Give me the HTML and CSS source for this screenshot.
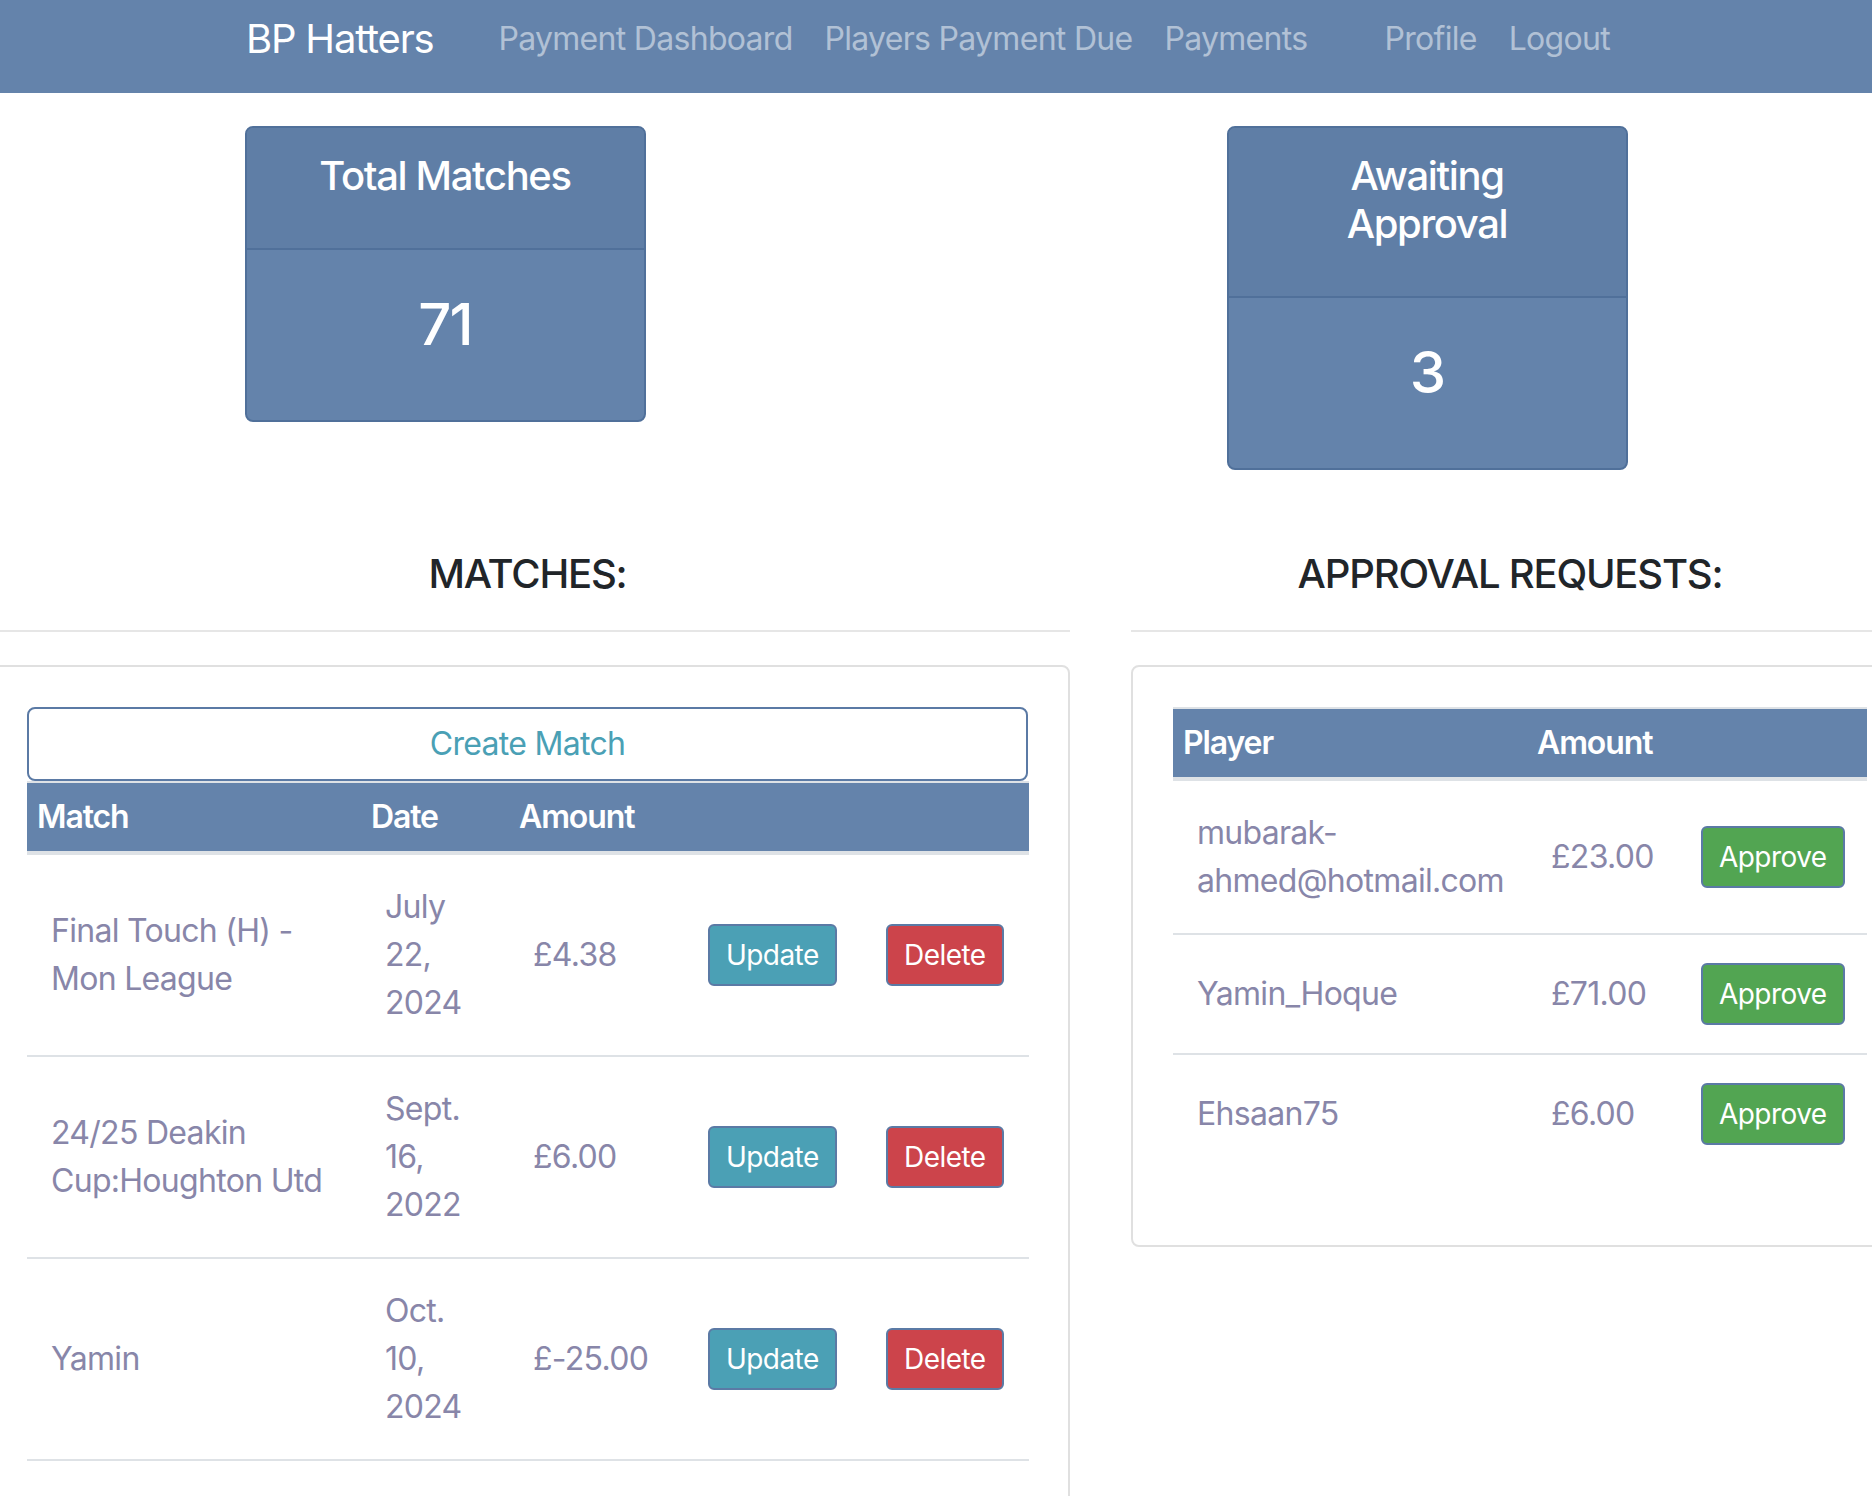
FILE: index.html
```html
<!DOCTYPE html>
<html lang="en">
<head>
<meta charset="utf-8">
<title>BP Hatters</title>
<link rel="stylesheet" href="styles.css">
</head>
<body>
<nav class="navbar">
  <div class="nav-inner">
    <a class="brand" href="#">BP Hatters</a>
    <ul class="nav-links">
      <li><a href="#">Payment Dashboard</a></li>
      <li><a href="#">Players Payment Due</a></li>
      <li><a href="#">Payments</a></li>
    </ul>
    <ul class="nav-links nav-right">
      <li><a href="#">Profile</a></li>
      <li><a href="#">Logout</a></li>
    </ul>
  </div>
</nav>

<main>
  <section class="stats">
    <div class="stat-card">
      <div class="stat-head"><h5 class="stat-title">Total Matches</h5></div>
      <div class="stat-body"><h2 class="stat-value">71</h2></div>
    </div>
    <div class="stat-card">
      <div class="stat-head"><h5 class="stat-title">Awaiting Approval</h5></div>
      <div class="stat-body"><h2 class="stat-value">3</h2></div>
    </div>
  </section>

  <section class="panels">
    <div class="panel-col col-matches">
      <h4 class="section-title">MATCHES:</h4>
      <hr class="divider">
      <div class="panel-card">
        <a class="btn-create" href="#">Create Match</a>
        <table class="data-table matches-table">
          <colgroup>
            <col class="w-match"><col class="w-date"><col class="w-amount"><col class="w-update"><col class="w-delete">
          </colgroup>
          <thead>
            <tr><th>Match</th><th>Date</th><th>Amount</th><th></th><th></th></tr>
          </thead>
          <tbody>
            <tr>
              <td>Final Touch (H) - Mon League</td>
              <td>July 22, 2024</td>
              <td class="amount">£4.38</td>
              <td><a class="btn btn-info" href="#">Update</a></td>
              <td><a class="btn btn-danger" href="#">Delete</a></td>
            </tr>
            <tr>
              <td>24/25 Deakin Cup:Houghton Utd</td>
              <td>Sept. 16, 2022</td>
              <td class="amount">£6.00</td>
              <td><a class="btn btn-info" href="#">Update</a></td>
              <td><a class="btn btn-danger" href="#">Delete</a></td>
            </tr>
            <tr>
              <td>Yamin</td>
              <td>Oct. 10, 2024</td>
              <td class="amount">£-25.00</td>
              <td><a class="btn btn-info" href="#">Update</a></td>
              <td><a class="btn btn-danger" href="#">Delete</a></td>
            </tr>
          </tbody>
        </table>
      </div>
    </div>

    <div class="panel-col col-approvals">
      <h4 class="section-title">APPROVAL REQUESTS:</h4>
      <hr class="divider">
      <div class="panel-card">
        <table class="data-table approvals-table">
          <colgroup>
            <col class="w-player"><col class="w-pamount"><col class="w-approve">
          </colgroup>
          <thead>
            <tr><th>Player</th><th>Amount</th><th></th></tr>
          </thead>
          <tbody>
            <tr>
              <td>mubarak-ahmed@hotmail.com</td>
              <td class="amount">£23.00</td>
              <td><a class="btn btn-success" href="#">Approve</a></td>
            </tr>
            <tr>
              <td>Yamin_Hoque</td>
              <td class="amount">£71.00</td>
              <td><a class="btn btn-success" href="#">Approve</a></td>
            </tr>
            <tr>
              <td>Ehsaan75</td>
              <td class="amount">£6.00</td>
              <td><a class="btn btn-success" href="#">Approve</a></td>
            </tr>
          </tbody>
        </table>
      </div>
    </div>
  </section>
</main>
</body>
</html>
```

FILE: styles.css
```css
* { box-sizing: border-box; }

html, body { margin: 0; padding: 0; }

body {
  font-family: Inter, "Noto Sans", "Liberation Sans", sans-serif;
  font-size: 32px;
  line-height: 48px;
  letter-spacing: -0.022em;
  color: #212529;
  background: #ffffff;
  overflow-x: hidden;
}

/* ---------- navbar ---------- */
.navbar {
  background: #6483ab;
  height: 93px;
  padding-top: 9px;
}
.nav-inner {
  width: 1380px;
  margin: 0 auto;
  height: 60px;
  display: flex;
  align-items: center;
}
.brand {
  font-size: 40px;
  line-height: 60px;
  letter-spacing: -0.03em;
  color: #ffffff;
  text-decoration: none;
  margin-right: 49px;
}
.nav-links {
  display: flex;
  list-style: none;
  margin: 0;
  padding: 0;
}
.nav-links a {
  display: block;
  padding: 0 16px;
  font-size: 32px;
  line-height: 48px;
  color: rgba(255, 255, 255, 0.5);
  text-decoration: none;
}
.nav-right { margin-left: auto; }

/* ---------- stat cards ---------- */
.stats {
  width: 1383px;
  margin: 33px auto 0;
  display: flex;
  justify-content: space-between;
  align-items: flex-start;
}
.stat-card {
  width: 401px;
  border: 2px solid #50709a;
  border-radius: 8px;
  overflow: hidden;
  background: #6483ab;
  color: #ffffff;
  text-align: center;
}
.stat-head {
  background: #5f7ea6;
  border-bottom: 2px solid #50709a;
  padding: 24px 40px 48px;
}
.stat-title {
  margin: 0;
  font-size: 40px;
  line-height: 48px;
  font-weight: 500;
  letter-spacing: -0.034em;
}
.stat-body {
  padding: 39px 20px 61px;
}
.stat-value {
  margin: 0;
  font-size: 58px;
  line-height: 70px;
  font-weight: 500;
  letter-spacing: -0.03em;
}

/* ---------- panels ---------- */
.panels {
  display: flex;
  width: 1964px;
  margin: 80px 0 0 -45px;
}
.panel-col { flex: 0 0 auto; }
.col-matches { width: 1146px; padding: 0 31px 0 30px; }
.col-approvals { width: 818px; padding: 0 30px; }

.section-title {
  margin: 0;
  font-size: 40px;
  line-height: 48px;
  font-weight: 500;
  letter-spacing: -0.03em;
  text-align: center;
  color: #212529;
}
.divider {
  border: 0;
  border-top: 2px solid #e6e6e6;
  margin: 32px 0 33px;
  height: 0;
}
.panel-card {
  border: 2px solid #e0e0e0;
  border-radius: 8px;
  padding: 40px;
  background: #ffffff;
}

.btn-create {
  display: block;
  border: 2px solid #5b7aa5;
  border-radius: 8px;
  padding: 11px 24px;
  text-align: center;
  color: #4aa0b5;
  font-size: 32px;
  line-height: 48px;
  text-decoration: none;
}

/* ---------- tables ---------- */
.data-table {
  border-collapse: separate;
  border-spacing: 0;
  table-layout: fixed;
  margin-bottom: 32px;
}
.matches-table { width: 100%; }
.approvals-table { width: 694px; }

.w-match { width: 334px; }
.w-date { width: 148px; }
.w-amount { width: 175px; }
.w-update { width: 178px; }
.w-delete { width: 167px; }

.w-player { width: 354px; }
.w-pamount { width: 150px; }
.w-approve { width: 190px; }

.data-table th {
  background: #6483ab;
  color: #ffffff;
  font-weight: 600;
  letter-spacing: -0.035em;
  text-align: left;
  padding: 10px;
  border-top: 2px solid #dee2e6;
  border-bottom: 4px solid #dee2e6;
}
.data-table td {
  padding: 28px 24px;
  color: #8886a9;
  vertical-align: middle;
  border-top: 2px solid #dee2e6;
}
.data-table tbody tr:first-child td { border-top: 0; }
.matches-table tbody tr:last-child td { border-bottom: 2px solid #dee2e6; }
.data-table td.amount { white-space: nowrap; }

/* ---------- buttons ---------- */
.btn {
  display: block;
  width: max-content;
  font-size: 28px;
  line-height: 42px;
  letter-spacing: -0.02em;
  padding: 8px 16px;
  border: 2px solid #5b7aa5;
  border-radius: 6px;
  color: #ffffff;
  text-decoration: none;
}
.btn-info { background: #4ba0b5; }
.btn-danger { background: #cc444b; }
.btn-success { background: #52a552; }
```
